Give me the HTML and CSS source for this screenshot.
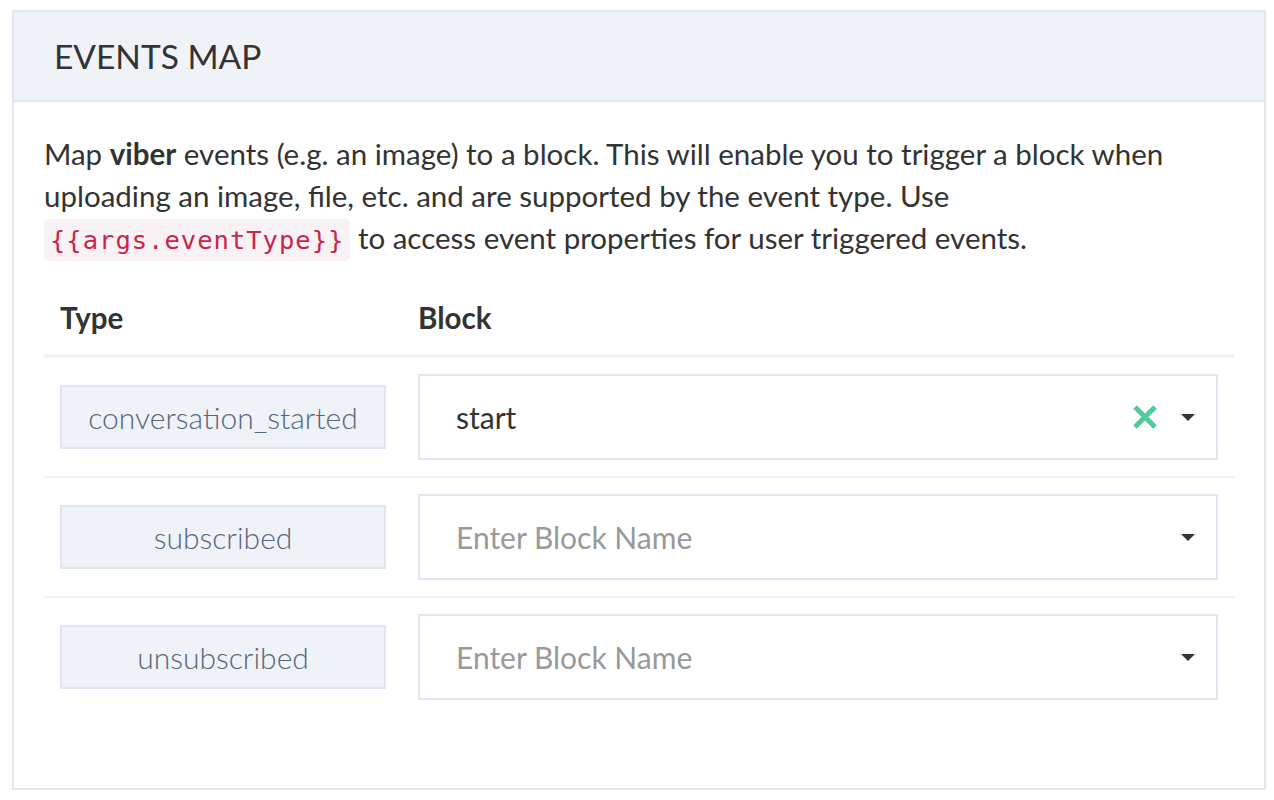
FILE: index.html
```html
<!DOCTYPE html>
<html>
<head>
<meta charset="utf-8">
<link rel="stylesheet" href="styles.css">
</head>
<body>
<div class="card">
  <div class="card-header">EVENTS MAP</div>
  <div class="card-body">
    <p class="intro">Map <strong>viber</strong> events (e.g. an image) to a block. This will enable you to trigger a block when uploading an image, file, etc. and are supported by the event type. Use <code>{{args.eventType}}</code> to access event properties for user triggered events.</p>
    <table class="map">
      <thead>
        <tr><th class="col-type">Type</th><th>Block</th></tr>
      </thead>
      <tbody>
        <tr>
          <td><div class="type-box">conversation_started</div></td>
          <td>
            <div class="select">
              <span class="value">start</span>
              <span class="clear"><svg width="26" height="26" viewBox="0 0 26 26"><path d="M3 3 L23 23 M23 3 L3 23" stroke="#52c99b" stroke-width="5" stroke-linecap="butt"/></svg></span>
              <span class="caret"></span>
            </div>
          </td>
        </tr>
        <tr>
          <td><div class="type-box">subscribed</div></td>
          <td>
            <div class="select">
              <span class="placeholder">Enter Block Name</span>
              <span class="caret"></span>
            </div>
          </td>
        </tr>
        <tr>
          <td><div class="type-box">unsubscribed</div></td>
          <td>
            <div class="select">
              <span class="placeholder">Enter Block Name</span>
              <span class="caret"></span>
            </div>
          </td>
        </tr>
      </tbody>
    </table>
  </div>
</div>
</body>
</html>
```

FILE: styles.css
```css
html, body {
  margin: 0;
  padding: 0;
  background: #ffffff;
}
body {
  padding: 10px 8px 0 12px;
  font-family: Lato, "Open Sans", sans-serif;
  color: #333333;
}
.card {
  width: 1250px;
  height: 776px;
  border: 2px solid #e1e8f2;
  box-shadow: 0 1px 3px rgba(0, 0, 0, 0.04);
  background: #fff;
}
.card-header {
  height: 88px;
  background: #eff2f7;
  border-bottom: 2px solid #e1e8f2;
  padding-left: 40px;
  font-size: 33.5px;
  line-height: 88px;
  color: #333;
}
.card-body {
  padding: 31px 30px 30px 30px;
}
.intro {
  margin: 0 0 20px 0;
  font-size: 29.5px;
  line-height: 42px;
  color: #333;
}
.intro strong {
  font-weight: 700;
}
.intro code {
  font-family: "DejaVu Sans Mono", monospace;
  font-size: 25.5px;
  letter-spacing: 1px;
  color: #c7254e;
  background: #f9f2f4;
  padding: 6px 6px;
  border-radius: 4px;
}
.map {
  width: 100%;
  border-collapse: collapse;
}
.map th {
  text-align: left;
  font-size: 29.5px;
  font-weight: 700;
  line-height: 42px;
  padding: 16px 16px 15px 16px;
  border-bottom: 4px solid #eef2f7;
}
.map th.col-type {
  width: 326px;
}
.map td {
  padding: 16px;
  border-top: 2px solid #eef2f7;
  vertical-align: middle;
}
.map tbody tr:first-child td {
  border-top: none;
}
.type-box {
  width: 322px;
  height: 60px;
  background: #eff2f7;
  border: 2px solid #dfe6f1;
  text-align: center;
  line-height: 60px;
  font-size: 30px;
  font-weight: 300;
  color: #56667c;
}
.select {
  height: 82px;
  border: 2px solid #dfe6f1;
  display: flex;
  align-items: center;
  padding: 0 21px 0 36px;
  font-size: 30px;
}
.select .value {
  flex: 1;
  color: #333;
}
.select .placeholder {
  flex: 1;
  color: #999;
}
.clear {
  width: 26px;
  height: 26px;
  margin-right: 23px;
  display: flex;
}
.caret {
  width: 0;
  height: 0;
  border-left: 7px solid transparent;
  border-right: 7px solid transparent;
  border-top: 7px solid #333;
}
```
